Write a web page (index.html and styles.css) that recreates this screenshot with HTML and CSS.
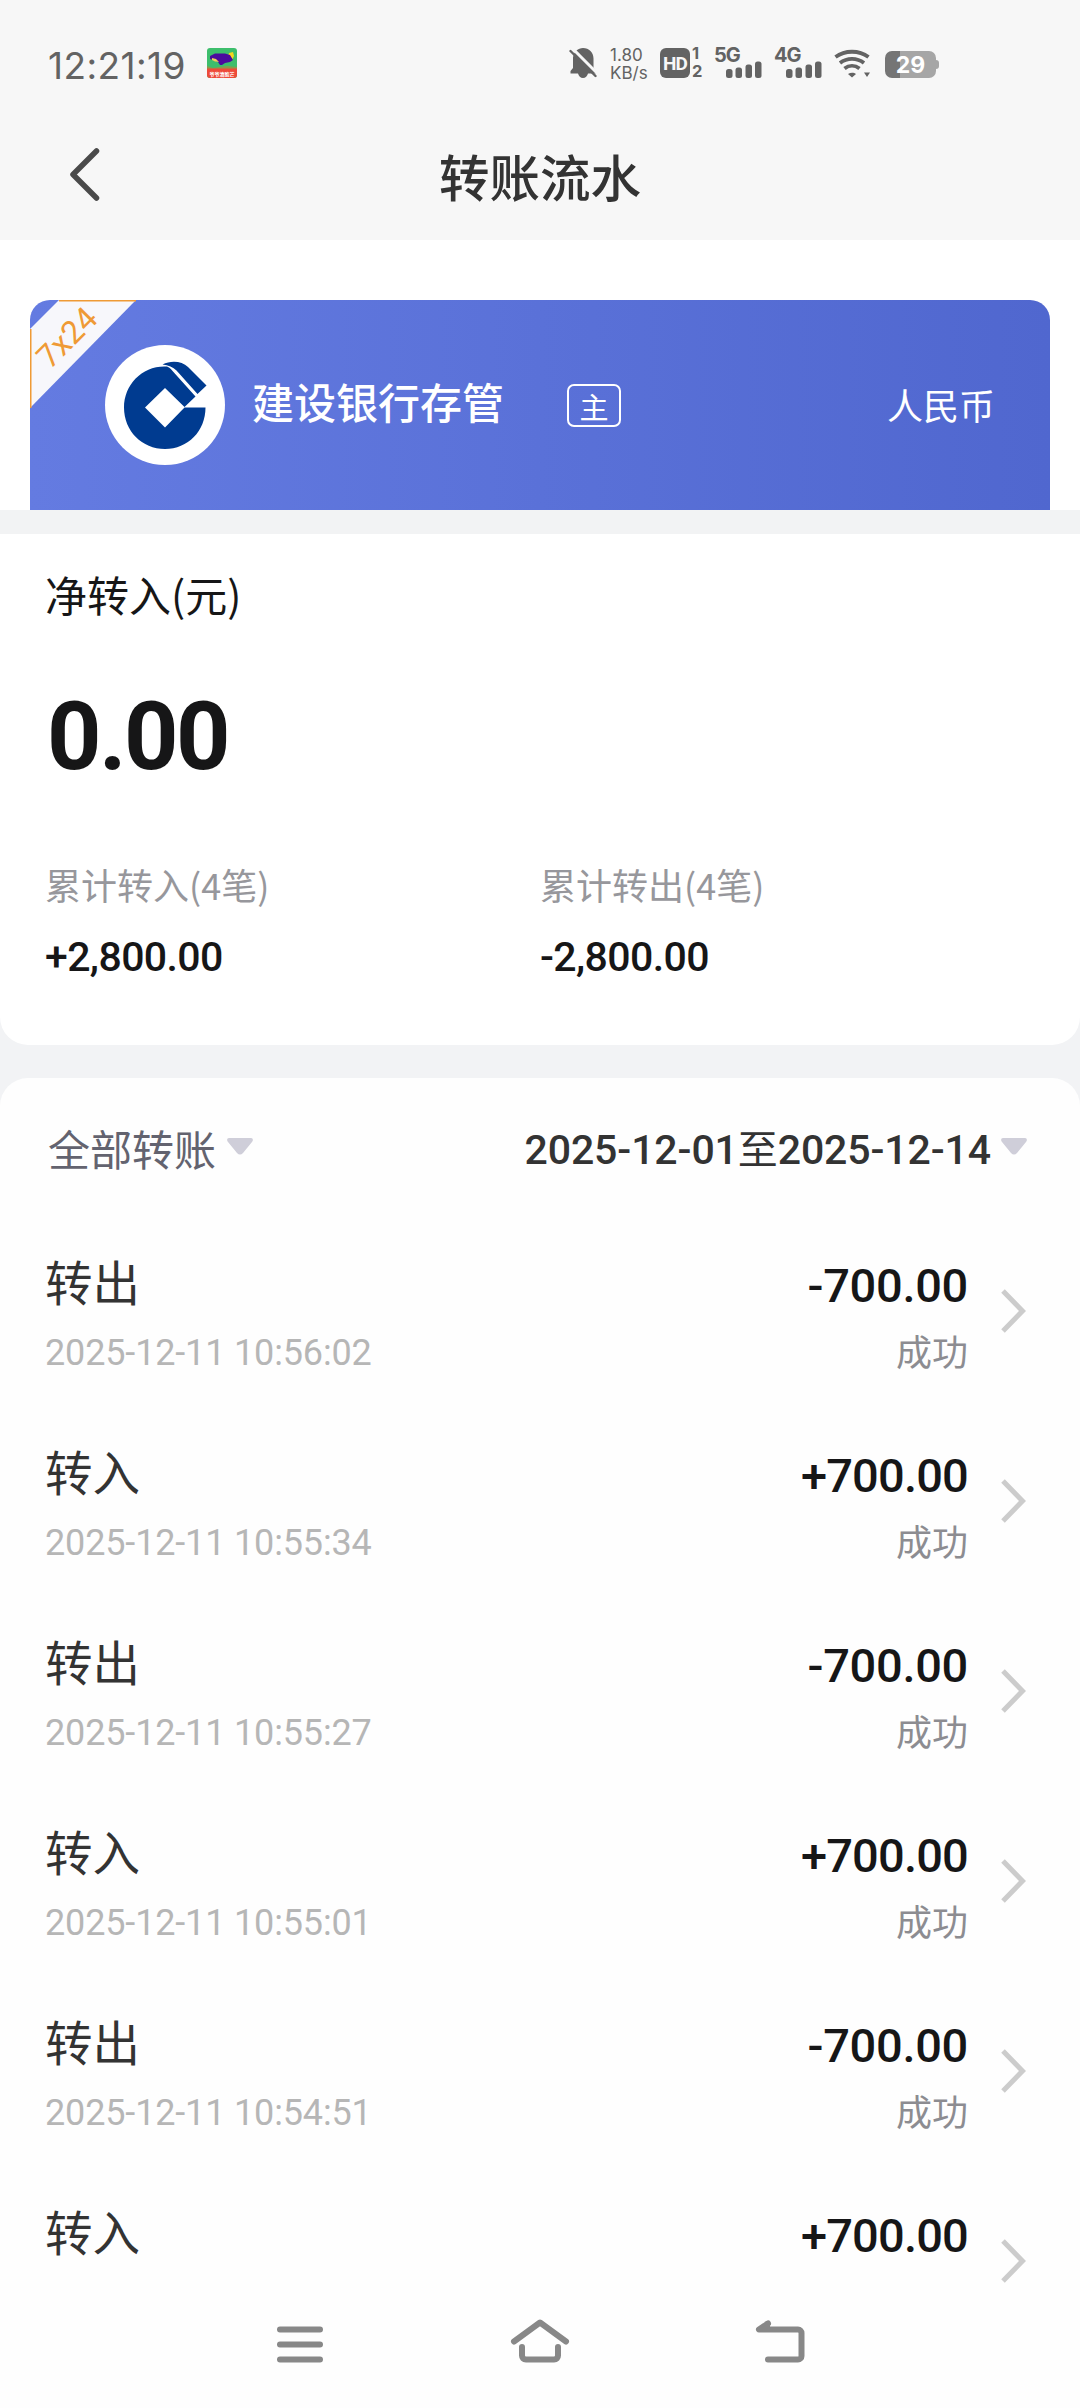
FILE: index.html
```html
<!DOCTYPE html>
<html lang="zh-CN">
<head>
<meta charset="utf-8">
<title>转账流水</title>
<link rel="stylesheet" href="styles.css">
</head>
<body>
<div class="screen">
  <div class="status">
    <span class="clock">12:21:19</span>
    <svg class="app" width="30" height="30" viewBox="0 0 30 30">
      <clipPath id="r"><rect width="30" height="30" rx="3"/></clipPath>
      <g clip-path="url(#r)">
        <rect width="30" height="30" fill="#3dbe6c"/>
        <path d="M0 18l6 2 6-1 8-1 10 1v4H0z" fill="#8a9a4c"/>
        <rect y="20.500" width="30" height="10" fill="#ee4a3a"/>
        <path d="M22 5l4-1 1 4-2 4-4-4z" fill="#f6d51e"/>
        <path d="M3 8l5-2.500h10l5 1.500 3 5-3 2-5 1-3 2h-2l-2-3-8-3z" fill="#4b0a9e"/>
        <path d="M5 10l4 1 3 3-4-.5-3-1.500z" fill="#f3d05a"/>
      </g>
      <text x="15" y="27.500" class="app-text">爷爷清脆芒</text>
    </svg>
    <svg class="bell" width="30" height="30" viewBox="0 0 30 30" fill="#636363">
      <path d="M4 9.500C5 3.500 9 0 14 0c6 0 10.500 4.500 10.500 10.500V20l3 3.500v2H19c-.7 2.600-2.500 4.500-5 4.500s-4.300-1.900-5-4.500H1.500v-2.500L4 20z"/>
      <path d="M4 1L29 26" stroke="#f7f7f7" stroke-width="3"/>
      <path d="M1.500 3L26.500 28" stroke="#636363" stroke-width="2.400" stroke-linecap="round"/>
    </svg>
    <span class="speed"><span>1.80</span><span>KB/s</span></span>
    <span class="hd">HD</span>
    <span class="sims"><span>1</span><span>2</span></span>
    <span class="signal"><span class="net">5G</span>
      <svg class="bars" width="36" height="17" viewBox="0 0 36 17" fill="#636363"><rect y="8" width="6.500" height="9" rx="2.500"/><rect x="9.500" y="6.500" width="6.500" height="10.500" rx="2.500"/><rect x="19.500" y="3.500" width="6.500" height="13.500" rx="2.500"/><rect x="29" y="0.500" width="6.500" height="16.500" rx="2.500"/></svg>
    </span>
    <span class="signal second"><span class="net">4G</span>
      <svg class="bars" width="36" height="17" viewBox="0 0 36 17" fill="#636363"><rect y="8" width="6.500" height="9" rx="2.500"/><rect x="9.500" y="6.500" width="6.500" height="10.500" rx="2.500"/><rect x="19.500" y="3.500" width="6.500" height="13.500" rx="2.500"/><rect x="29" y="0.500" width="6.500" height="16.500" rx="2.500"/></svg>
    </span>
    <svg class="wifi" width="38" height="30" viewBox="0 0 38 30" fill="none" stroke="#636363" stroke-width="3.800">
      <path d="M1.500 9C11 2 25 2 34.500 9M6 15c7-5.500 17-5.500 24 0M10.500 20.500c4.500-3.500 10.500-3.500 15 0"/>
      <path d="M14 26c2.500-1.600 6-1.600 8 0L18 29.500zM30 24.500h6L33 29z" fill="#636363" stroke="none"/>
    </svg>
    <span class="battery">29</span>
  </div>
  <header class="header">
    <svg class="back" width="36" height="56" viewBox="0 0 36 56" fill="none" stroke="#4a4a4a" stroke-width="5.500" stroke-linecap="round" stroke-linejoin="round"><path d="M30.500 5L7 28.500l23.500 23.500"/></svg>
    <h1>转账流水</h1>
  </header>
  <section class="bank-wrap">
    <div class="bank">
      <svg class="ribbon" width="108" height="112" viewBox="0 0 108 112">
        <path d="M0 29L29 0h77L0 108z" fill="#f7f7fb"/>
        <path d="M.75 108V29M29 .75h77" stroke="#ef9a35" stroke-width="1.500"/>
        <text transform="translate(20 70) rotate(-45)" class="ribbon-text">7x24</text>
      </svg>
      <svg class="logo" width="120" height="120" viewBox="0 0 120 120">
        <circle cx="60" cy="60" r="60" fill="#fff"/>
        <path d="M62 21.500C38 20 19 39 19 62.500 19 86 37 104 60 104s40.500-18 40.500-41.500H79.500L60 82.500 40 62.500 60 43l19.500 19L90.500 51.500 68 26.500c-2-2.500-4-4.200-6-5z" fill="#003b90"/>
        <path d="M57.500 19.500C66 15 77 16 83 22l18.500 18.500-9 8.500L71.500 25.500c-3.500-3.500-8-5.500-14-6z" fill="#003b90"/>
      </svg>
      <span class="bank-name">建设银行存管</span>
      <span class="tag">主</span>
      <span class="currency">人民币</span>
    </div>
  </section>
  <section class="summary">
    <div class="net-label">净转入(元)</div>
    <div class="net-value">0.00</div>
    <div class="totals">
      <div><div class="total-label">累计转入(4笔)</div><div class="total-value">+2,800.00</div></div>
      <div><div class="total-label">累计转出(4笔)</div><div class="total-value">-2,800.00</div></div>
    </div>
  </section>
  <section class="records">
    <div class="filters">
      <span class="kind">全部转账</span>
      <svg class="caret" width="26" height="17" viewBox="0 0 26 17"><path d="M2 0h22c2 0 2.500 2.500 1 4L16 15c-2 2-4 2-6 0L1 4C-.5 2.500 0 0 2 0z" fill="#cfced9"/></svg>
      <span class="range">2025-12-01<span class="to">至</span>2025-12-14</span>
      <svg class="caret" width="26" height="17" viewBox="0 0 26 17"><path d="M2 0h22c2 0 2.500 2.500 1 4L16 15c-2 2-4 2-6 0L1 4C-.5 2.500 0 0 2 0z" fill="#cfced9"/></svg>
    </div>
    <ul class="list">
      <li class="row"><div class="left"><div class="type">转出</div><div class="time">2025-12-11 10:56:02</div></div><div class="right"><div class="amount out">-700.00</div><div class="state">成功</div></div><svg class="arrow" width="26" height="44" viewBox="0 0 26 44"><path d="M3 2l19.500 20L3 42"/></svg></li>
      <li class="row"><div class="left"><div class="type">转入</div><div class="time">2025-12-11 10:55:34</div></div><div class="right"><div class="amount">+700.00</div><div class="state">成功</div></div><svg class="arrow" width="26" height="44" viewBox="0 0 26 44"><path d="M3 2l19.500 20L3 42"/></svg></li>
      <li class="row"><div class="left"><div class="type">转出</div><div class="time">2025-12-11 10:55:27</div></div><div class="right"><div class="amount out">-700.00</div><div class="state">成功</div></div><svg class="arrow" width="26" height="44" viewBox="0 0 26 44"><path d="M3 2l19.500 20L3 42"/></svg></li>
      <li class="row"><div class="left"><div class="type">转入</div><div class="time">2025-12-11 10:55:01</div></div><div class="right"><div class="amount">+700.00</div><div class="state">成功</div></div><svg class="arrow" width="26" height="44" viewBox="0 0 26 44"><path d="M3 2l19.500 20L3 42"/></svg></li>
      <li class="row"><div class="left"><div class="type">转出</div><div class="time">2025-12-11 10:54:51</div></div><div class="right"><div class="amount out">-700.00</div><div class="state">成功</div></div><svg class="arrow" width="26" height="44" viewBox="0 0 26 44"><path d="M3 2l19.500 20L3 42"/></svg></li>
      <li class="row"><div class="left"><div class="type">转入</div></div><div class="right"><div class="amount">+700.00</div></div><svg class="arrow" width="26" height="44" viewBox="0 0 26 44"><path d="M3 2l19.500 20L3 42"/></svg></li>
    </ul>
  </section>
  <nav class="nav">
    <svg width="60" height="50" viewBox="0 0 60 50"><path d="M10 12.500h40M10 27.500h40M10 42.500h40"/></svg>
    <svg width="60" height="50" viewBox="0 0 60 50"><path d="M4 24.500L30 5.500l26 19M12 30v8.500c0 2.500 1.500 4 4 4h28c2.500 0 4-1.500 4-4V30"/></svg>
    <svg width="60" height="50" viewBox="0 0 60 50"><path d="M18 6.500L9 12.500h39c2 0 3.500 1.500 3.500 3.500v23c0 2-1.500 3.500-3.500 3.500H18M17 7v5"/></svg>
  </nav>
</div>
</body>
</html>
```
FILE: styles.css
```css
* { box-sizing: border-box; margin: 0; padding: 0; }
body { font-family: Roboto, "Noto Sans CJK SC", sans-serif; color: #161617; background: #fefefe; }
svg { display: block; flex: none; }
.screen { width: 1080px; height: 2408px; display: flex; flex-direction: column; overflow: hidden; background: linear-gradient(#f2f3f5 1200px, #fefefe 1200px); }

.status { height: 108px; padding: 48px 0 0 48px; background: #f7f7f7; display: flex; align-items: flex-start; color: #636363; flex: none; }
.clock { width: 159px; font: 400 37px/35px Inter, sans-serif; letter-spacing: 0.400px; white-space: nowrap; }
.app { margin-right: 332px; }
.app-text { font: 700 5px "Noto Sans CJK SC", sans-serif; fill: #fff; text-anchor: middle; }
.bell { margin-right: 11px; }
.speed { width: 50px; display: flex; flex-direction: column; font: 400 17px/18px Inter, sans-serif; margin-top: -2px; white-space: nowrap; }
.hd { width: 30px; height: 30px; border-radius: 6px; background: #636363; color: #f7f7f7; font: 700 19px/31px Roboto, sans-serif; text-align: center; letter-spacing: -1px; }
.sims { width: 24px; padding-left: 2px; display: flex; flex-direction: column; font: 700 16.500px/17.500px Inter, sans-serif; margin-top: -3px; }
.signal { width: 48px; display: flex; flex-direction: column; align-items: flex-end; }
.net { align-self: flex-start; font: 700 20px/24px Inter, sans-serif; letter-spacing: -1px; margin: -5px 0 -6px; }
.second { margin-left: 12px; }
.wifi { margin-left: 12px; }
.battery { position: relative; width: 51px; height: 27px; margin: 3px 0 0 13px; border-radius: 7px; background: linear-gradient(90deg, #757575 15px, #a6a6a6 15px); color: #fff; font: 700 23px/28px Inter, sans-serif; text-align: center; }
.battery::after { content: ""; position: absolute; left: 51px; top: 9px; width: 3px; height: 9px; border-radius: 0 3px 3px 0; background: #a6a6a6; }

.header { height: 132px; background: #f7f7f7; display: grid; grid-template-columns: 1fr auto 1fr; align-items: center; padding: 1px 66px 0; flex: none; }
.back { margin-bottom: 2px; }
.header h1 { font: 500 50.500px/70px "Noto Sans CJK SC", sans-serif; color: #333; }

.bank-wrap { height: 294px; padding: 60px 30px 0; border-bottom: 24px solid #f2f3f4; background: #fff; flex: none; }
.bank { position: relative; height: 210px; border-radius: 20px 20px 0 0; background: linear-gradient(90deg, #647be1, #5067cf); color: #fff; display: flex; align-items: center; padding: 0 55px 0 75px; font-family: "Noto Sans CJK SC", sans-serif; }
.ribbon { position: absolute; left: 0; top: 0; }
.ribbon-text { font: 400 32px Roboto, sans-serif; fill: #ef9a35; }
.logo { margin-right: 27px; }
.bank-name { font-size: 42px; line-height: 60px; font-weight: 500; margin-bottom: 9px; }
.tag { width: 54px; height: 43px; margin-left: 63px; border: 2px solid #fff; border-radius: 7px; font-size: 29px; line-height: 40px; text-align: center; }
.currency { margin-left: auto; font-size: 36px; line-height: 52px; margin-bottom: 2px; }

.summary { height: 511px; padding: 30px 45px 0; background: #fff; border-radius: 0 0 28px 28px; flex: none; }
.net-label { font: 400 42px/60px "Noto Sans CJK SC", sans-serif; }
.net-value { margin: 57px 0 0 2px; font-size: 95px; font-weight: 700; line-height: 112px; letter-spacing: -2.500px; }
.totals { display: grid; grid-template-columns: 495px 1fr; margin-top: 65px; }
.total-label { font: 400 36px/52px "Noto Sans CJK SC", sans-serif; color: #97979c; }
.total-value { margin-top: 22px; font-size: 41px; line-height: 50px; font-weight: 500; letter-spacing: -0.600px; }

.records { margin-top: 33px; height: 1207px; border-radius: 28px 28px 0 0; background: #fefefe; overflow: hidden; flex: none; }
.filters { height: 143px; padding: 0 53px 0 48px; display: flex; align-items: center; }
.kind { font: 400 42px/60px "Noto Sans CJK SC", sans-serif; color: #63636f; margin: 0 11px 4px 0; }
.caret { margin-bottom: 6px; }
.range { margin: 2px 10px 0 auto; font-size: 41px; line-height: 60px; font-weight: 500; color: #333; letter-spacing: -0.100px; white-space: nowrap; }
.to { font-size: 40px; font-weight: 400; }
.list { list-style: none; }
.row { height: 190px; padding: 24px 54px 0 45px; display: flex; color: #161617; }
.type { font: 400 47.500px/70px "Noto Sans CJK SC", sans-serif; color: #333; margin-top: 1px; }
.time { font-size: 36px; line-height: 44px; color: #b6b6b6; margin-top: 15px; letter-spacing: -0.150px; }
.right { margin-left: auto; text-align: right; }
.amount { font-size: 47px; line-height: 60px; font-weight: 500; margin-top: 11px; letter-spacing: -0.800px; }
.out { letter-spacing: -0.300px; }
.state { font: 400 36px/52px "Noto Sans CJK SC", sans-serif; color: #8c8c91; margin-top: 8px; }
.arrow { margin: 44px 0 0 32px; fill: none; stroke: #ccc; stroke-width: 5; }

.nav { flex: 1; padding: 32px 0 0 270px; display: flex; gap: 180px; background: #fefefe; }
.nav svg { fill: none; stroke: #888; stroke-width: 6; stroke-linecap: round; stroke-linejoin: round; }
```
